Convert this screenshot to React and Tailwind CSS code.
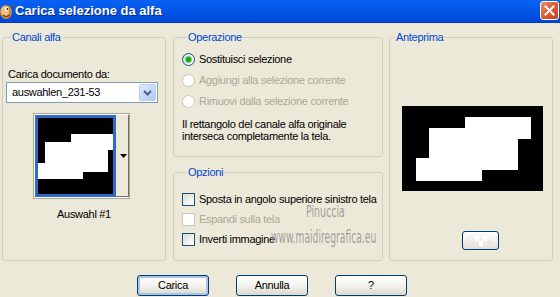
import React from "react";

const Radio = ({ checked, disabled, label }) => (
  <div className="flex items-center h-[13px] gap-[4px]">
    <span
      className={`flex items-center justify-center w-[13px] h-[13px] rounded-full border ${
        disabled
          ? "border-[#cac8bb] bg-white"
          : "border-[#1c5180] bg-gradient-to-br from-[#dcdcd7] to-white"
      }`}
    >
      {checked && (
        <span className="block w-[5px] h-[5px] rounded-full bg-[#21a121] shadow-[0_0_0_1px_#6ed36e]" />
      )}
    </span>
    <span className={disabled ? "text-[#aca899]" : "text-black"}>{label}</span>
  </div>
);

const Check = ({ disabled, label }) => (
  <div className="flex items-center h-[13px] gap-[4px]">
    <span
      className={`block w-[13px] h-[13px] border ${
        disabled
          ? "border-[#cac8bb] bg-white"
          : "border-[#1c5180] bg-gradient-to-br from-[#dcdcd7] to-white"
      }`}
    />
    <span className={disabled ? "text-[#aca899]" : "text-black"}>{label}</span>
  </div>
);

const Button = ({ children, isDefault }) => (
  <button
    className={`w-[72px] h-[21px] rounded-[3px] border border-[#003c74] bg-gradient-to-b from-white via-[#f4f3ee] to-[#dcd8cc] text-black leading-none ${
      isDefault ? "shadow-[inset_0_0_0_2px_#a9c3f0]" : ""
    }`}
  >
    {children}
  </button>
);

const Legend = ({ children }) => (
  <legend className="ml-[5px] px-[1px] text-[#0046d5] leading-[13px]">
    {children}
  </legend>
);

export default function App() {
  return (
    <div className="w-[560px] h-[297px] overflow-hidden bg-[#ece9d8] font-['Liberation_Sans',Arial,sans-serif] text-[11px] tracking-[-0.3px] select-none">
      {/* title bar */}
      <div className="flex items-center h-[23px] bg-gradient-to-b from-[#0a62f5] via-[#0055e5] to-[#0047d6] border-b border-[#003cc0]">
        <svg width="15" height="17" viewBox="0 0 15 17">
          <ellipse cx="6" cy="9" rx="6" ry="7" fill="#d98a3a" />
          <ellipse cx="5" cy="8" rx="4" ry="5" fill="#f2c27a" />
          <circle cx="7" cy="6" r="2" fill="#fff" />
          <circle cx="7.5" cy="6" r="1" fill="#222" />
          <path d="M3 12 Q6 15 10 12" stroke="#7a3a12" strokeWidth="1.2" fill="none" />
          <path d="M11 3 L14 1 L13 5 Z" fill="#8a4a1a" />
        </svg>
        <span className="text-white font-bold text-[13px] tracking-normal [text-shadow:1px_1px_0_#0a2a8a]">
          Carica selezione da alfa
        </span>
        <div className="ml-auto mr-[1px] mb-[1px] flex items-center justify-center w-[19px] h-[19px] rounded-[3px] border border-white bg-gradient-to-br from-[#eb8c6d] via-[#dc5a35] to-[#c2401f]">
          <svg width="11" height="11" viewBox="0 0 11 11">
            <path d="M1.5 1.5 L9.5 9.5 M9.5 1.5 L1.5 9.5" stroke="#fff" strokeWidth="2" strokeLinecap="square" />
          </svg>
        </div>
      </div>

      {/* body */}
      <div className="relative px-[2px] pt-[8px]">
        <div className="flex">
          {/* Canali alfa */}
          <fieldset className="w-[164px] h-[230px] border border-[#d0d0bf] rounded-[3px] pl-[3px]">
            <Legend>Canali alfa</Legend>
            <div className="mt-[24px] ml-[2px] leading-[13px]">Carica documento da:</div>
            <div className="mt-[1px] flex items-center w-[152px] h-[21px] border border-[#7f9db9] bg-white">
              <span className="ml-[5px] flex-1">auswahlen_231-53</span>
              <span className="mr-[1px] flex items-center justify-center w-[17px] h-[17px] rounded-[2px] border border-[#b9cbf3] bg-gradient-to-br from-[#dde8fd] to-[#b4c9f6]">
                <svg width="9" height="6" viewBox="0 0 9 6">
                  <path d="M1 1 L4.5 4.5 L8 1" stroke="#4d6185" strokeWidth="2" fill="none" />
                </svg>
              </span>
            </div>
            <div className="mt-[10px] ml-[27px] flex w-[97px] h-[86px] border border-[#a7a69a] bg-white pl-[1px] py-[1px]">
              <div className="w-[81px] h-[82px] border-[3px] border-[#316ac5] bg-black">
                <svg width="75" height="76" viewBox="0 0 75 76" className="block">
                  <polygon
                    points="33,16 75,16 75,32 70,32 70,54 45,54 45,61 0,61 0,45 7,45 7,24 33,24"
                    fill="#fff"
                  />
                </svg>
              </div>
              <div className="flex items-center justify-center pl-[2px] w-[13px] h-[82px] bg-[#ece9d8] border-r border-b border-[#716f64]">
                <svg width="7" height="4" viewBox="0 0 7 4">
                  <path d="M0 0 L7 0 L3.5 4 Z" fill="#000" />
                </svg>
              </div>
            </div>
            <div className="mt-[9px] text-center leading-[13px] pr-[3px]">Auswahl #1</div>
          </fieldset>

          {/* middle column */}
          <div className="ml-[7px] w-[210px] flex flex-col">
            <fieldset className="h-[126px] border border-[#d0d0bf] rounded-[3px] pl-[8px]">
              <Legend>Operazione</Legend>
              <div className="mt-[9px] flex flex-col gap-[8px] leading-[13px]">
                <Radio checked label="Sostituisci selezione" />
                <Radio disabled label="Aggiungi alla selezione corrente" />
                <Radio disabled label="Rimuovi dalla selezione corrente" />
              </div>
              <p className="mt-[10px] leading-[12px]">
                Il rettangolo del canale alfa originale
                <br />
                interseca completamente la tela.
              </p>
            </fieldset>
            <fieldset className="mt-[9px] h-[95px] border border-[#d0d0bf] rounded-[3px] pl-[8px]">
              <Legend>Opzioni</Legend>
              <div className="mt-[14px] flex flex-col gap-[7px] leading-[13px]">
                <Check label="Sposta in angolo superiore sinistro tela" />
                <Check disabled label="Espandi sulla tela" />
                <Check label="Inverti immagine" />
              </div>
            </fieldset>
          </div>

          {/* Anteprima */}
          <fieldset className="ml-[6px] w-[164px] h-[230px] border border-[#d0d0bf] rounded-[3px]">
            <Legend>Anteprima</Legend>
            <div className="mt-[62px] ml-[12px] w-[141px] h-[85px] bg-black">
              <svg width="141" height="85" viewBox="0 0 141 85" className="block">
                <polygon
                  points="63,11 129,11 129,33 116,33 116,64 80,64 80,75 14,75 14,52 27,52 27,22 63,22"
                  fill="#fff"
                />
              </svg>
            </div>
            <div className="mt-[40px] ml-[72px] flex items-center justify-center w-[37px] h-[19px] rounded-[3px] border border-[#003c74] bg-gradient-to-b from-white to-[#e3e0d6]">
              <svg width="20" height="10" viewBox="0 0 20 10">
                <rect x="4" y="0" width="4" height="5" fill="#fff" />
                <rect x="12" y="0" width="4" height="5" fill="#fff" />
                <rect x="8" y="5" width="4" height="5" fill="#fff" />
                <rect x="0" y="5" width="4" height="5" fill="#e8e6de" />
                <rect x="16" y="5" width="4" height="5" fill="#e8e6de" />
              </svg>
            </div>
          </fieldset>
        </div>

        {/* buttons */}
        <div className="mt-[14px] ml-[135px] flex gap-[27px]">
          <Button isDefault>Carica</Button>
          <Button>Annulla</Button>
          <Button>?</Button>
        </div>

        {/* watermark */}
        <div className="absolute left-[306px] top-[184px] text-[#8a8a8a]/80 font-['DejaVu_Sans_Condensed','Liberation_Sans',sans-serif] text-[15px] leading-[11px] tracking-normal scale-x-[70%] origin-left pointer-events-none">
          Pinuccia
        </div>
        <div className="absolute left-[271px] top-[206px] text-[#8a8a8a]/80 font-['DejaVu_Sans_Condensed','Liberation_Sans',sans-serif] text-[17px] leading-[17px] tracking-normal scale-x-[60%] origin-left pointer-events-none">
          www.maidiregrafica.eu
        </div>
      </div>
    </div>
  );
}
